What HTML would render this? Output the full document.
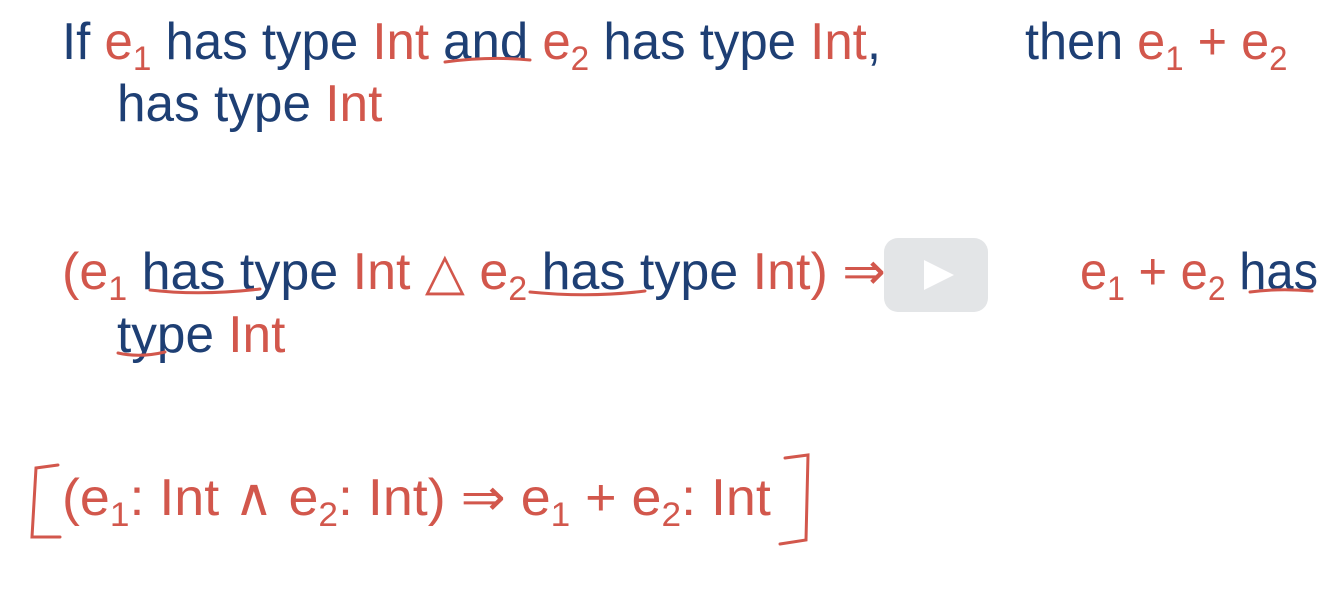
<!DOCTYPE html>
<html><head><meta charset="utf-8"><style>
body{margin:0;width:1344px;height:594px;background:#fff;overflow:hidden;position:relative;font-family:"Liberation Sans",sans-serif;}
.l{position:absolute;white-space:nowrap;font-size:52px;color:#1e3f74;transform-origin:0 0;line-height:1}
.r{color:#d2574c}
sub{font-size:34px;vertical-align:-11px;line-height:0}
.play{position:absolute;left:884px;top:238px;width:104px;height:74px;background:#e3e5e7;border-radius:14px}
.play:after{content:"";position:absolute;left:40px;top:22px;border-left:30px solid #fff;border-top:15px solid transparent;border-bottom:15px solid transparent}
</style></head><body>
<div class="l" style="left:62px;top:16px;transform:scaleX(0.98)">If <span class="r">e<sub>1</sub></span> has type <span class="r">Int</span> and <span class="r">e<sub>2</sub></span> has type <span class="r">Int</span>,</div>
<div class="l" style="left:1025px;top:16px;transform:scaleX(0.97)">then <span class="r">e<sub>1</sub> + e<sub>2</sub></span></div>
<div class="l" style="left:117px;top:78px;transform:scaleX(0.987)">has type <span class="r">Int</span></div>
<div class="l" style="left:62px;top:246px;transform:scaleX(1.0)"><span class="r">(e<sub>1</sub></span> has type <span class="r">Int △ e<sub>2</sub></span> has type <span class="r">Int) ⇒</span></div>
<div class="l" style="left:1080px;top:246px;transform:scaleX(0.94)"><span class="r">e<sub>1</sub> + e<sub>2</sub></span> has</div>
<div class="l" style="left:117px;top:309px;transform:scaleX(0.987)">type <span class="r">Int</span></div>
<div class="l r" style="left:62px;top:472px;transform:scaleX(1.035)">(e<sub>1</sub>: Int ∧ e<sub>2</sub>: Int) ⇒ e<sub>1</sub> + e<sub>2</sub>: Int</div>
<svg width="1344" height="594" style="position:absolute;left:0;top:0" fill="none" stroke="#d2574c" stroke-width="3" stroke-linecap="round">
<path d="M445 62 Q490 56 530 60"/>
<path d="M150 290 Q200 296 260 289"/>
<path d="M530 292 Q590 298 645 291"/>
<path d="M1250 292 Q1280 288 1312 291"/>
<path d="M118 353 Q140 358 165 352"/>
<path d="M58 465 L36 468 L32 537 L60 537"/>
<path d="M785 458 L808 455 L806 540 L780 544"/>
</svg>
<div class="play"></div>
</body></html>
